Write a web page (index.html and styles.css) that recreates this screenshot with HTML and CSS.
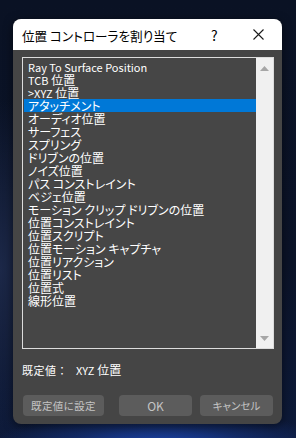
FILE: index.html
```html
<!DOCTYPE html>
<html lang="ja">

<head>
    <meta charset="UTF-8">
    <title>位置 コントローラを割り当て</title>
    <link rel="stylesheet" href="styles.css">
</head>

<body>
    <!-- ダイアログ -->
    <div class="dialog">
        <div class="title-bar">
            <span class="title">位置 コントローラを割り当て</span>
            <span class="help">?</span>
            <span class="close">
                <svg width="11" height="11" viewBox="0 0 11 11"><path d="M0.5 0.5 L10.5 10.5 M10.5 0.5 L0.5 10.5" stroke="#1a1a1a" stroke-width="1.1" fill="none"/></svg>
            </span>
        </div>

        <div class="dialog-body">
            <!-- コントローラ一覧 -->
            <div class="list-box">
                <div class="list-items">
                    <div class="list-item"><span class="latin">Ray To Surface Position</span></div>
                    <div class="list-item"><span class="latin">TCB</span> 位置</div>
                    <div class="list-item"><span class="latin">&gt;XYZ</span> 位置</div>
                    <div class="list-item selected">アタッチメント</div>
                    <div class="list-item">オーディオ位置</div>
                    <div class="list-item">サーフェス</div>
                    <div class="list-item">スプリング</div>
                    <div class="list-item">ドリブンの位置</div>
                    <div class="list-item">ノイズ位置</div>
                    <div class="list-item">パス コンストレイント</div>
                    <div class="list-item">ベジェ位置</div>
                    <div class="list-item">モーション クリップ ドリブンの位置</div>
                    <div class="list-item">位置コンストレイント</div>
                    <div class="list-item">位置スクリプト</div>
                    <div class="list-item">位置モーション キャプチャ</div>
                    <div class="list-item">位置リアクション</div>
                    <div class="list-item">位置リスト</div>
                    <div class="list-item">位置式</div>
                    <div class="list-item">線形位置</div>
                </div>
                <div class="scrollbar">
                    <svg width="9" height="5" viewBox="0 0 9 5"><path d="M4.5 0 L9 5 L0 5 Z" fill="#a6a6a6"/></svg>
                    <svg width="9" height="5" viewBox="0 0 9 5"><path d="M0 0 L9 0 L4.5 5 Z" fill="#a6a6a6"/></svg>
                </div>
            </div>

            <div class="default-row">
                <span class="default-label">既定値：</span>
                <span class="default-value"><span class="latin">XYZ</span> 位置</span>
            </div>

            <div class="button-row">
                <button class="btn btn-default">既定値に設定</button>
                <button class="btn btn-ok"><span class="latin">OK</span></button>
                <button class="btn btn-cancel">キャンセル</button>
            </div>
        </div>
    </div>
</body>

</html>
```

FILE: styles.css
```css
/* ページ全体 */
body {
    margin: 0;
    width: 296px;
    height: 438px;
    overflow: hidden;
    padding: 19px 0 0 13px;
    box-sizing: border-box;
    font-family: "Noto Sans CJK JP", sans-serif;
    background:
        radial-gradient(ellipse 170px 40px at 160px 448px, #1d49b8 0%, rgba(29, 73, 184, 0.35) 55%, rgba(0, 0, 0, 0) 100%),
        radial-gradient(ellipse 90px 170px at 0px 270px, #1c2848 0%, rgba(0, 0, 0, 0) 100%),
        linear-gradient(180deg, #0a1224 0%, #0b1328 60%, #0d1a3a 100%);
}

/* ダイアログ本体 */
.dialog {
    width: 269px;
    height: 405px;
    border-radius: 8px;
    overflow: hidden;
    display: flex;
    flex-direction: column;
    background-color: #454545;
    box-shadow: 0 2px 10px rgba(0, 0, 0, 0.5);
}

/* タイトルバー */
.title-bar {
    height: 31px;
    flex-shrink: 0;
    background-color: #fff;
    display: flex;
    align-items: center;
    padding-left: 9px;
    color: #000;
}

.title {
    font-size: 12.6px;
    font-feature-settings: "palt";
    flex: 1;
    padding-top: 1px;
}

.help {
    font-size: 14px;
    width: 8px;
    margin-right: 34px;
    padding-top: 1px;
}

.close {
    width: 11px;
    margin-right: 18px;
    display: flex;
}

/* ダイアログ内容 */
.dialog-body {
    flex: 1;
    display: flex;
    flex-direction: column;
    padding: 7px 8px 8px 9px;
}

/* リストボックス */
.list-box {
    height: 292px;
    box-sizing: border-box;
    border: 1px solid #dcdcdc;
    display: flex;
    background-color: #464646;
}

.list-items {
    flex: 1;
    padding: 2px 0 0 1px;
}

.list-item {
    height: 13px;
    line-height: 13px;
    padding-left: 4px;
    font-size: 12px;
    color: #fff;
    white-space: nowrap;
    font-feature-settings: "palt";
}

.list-item.selected {
    background-color: #0078d7;
}

/* 英字部分は少し小さめ */
.latin {
    font-size: 11px;
}

.scrollbar {
    width: 17px;
    background-color: #f0f0f0;
    display: flex;
    flex-direction: column;
    justify-content: space-between;
    align-items: center;
    padding: 8px 0 7px;
}

/* 既定値 */
.default-row {
    margin-top: 14px;
    height: 14px;
    line-height: 14px;
    font-size: 11px;
    color: #fff;
    display: flex;
}

.default-label {
    width: 54px;
    letter-spacing: 0.5px;
}

.default-value {
    font-size: 12px;
}

/* ボタン */
.button-row {
    margin-top: auto;
    display: flex;
    padding-left: 1px;
}

.btn {
    height: 21px;
    border: none;
    border-radius: 4px;
    background-color: #5c5c5c;
    color: #c4c4c4;
    font-family: "Noto Sans CJK JP", sans-serif;
    font-size: 10.5px;
    padding: 0;
}

.btn-default {
    width: 81px;
    letter-spacing: 0.3px;
}

.btn-ok {
    width: 73px;
    margin-left: 15px;
}

.btn-ok .latin {
    font-size: 12px;
}

.btn-cancel {
    width: 73px;
    margin-left: 8px;
    font-feature-settings: "palt";
}
```
